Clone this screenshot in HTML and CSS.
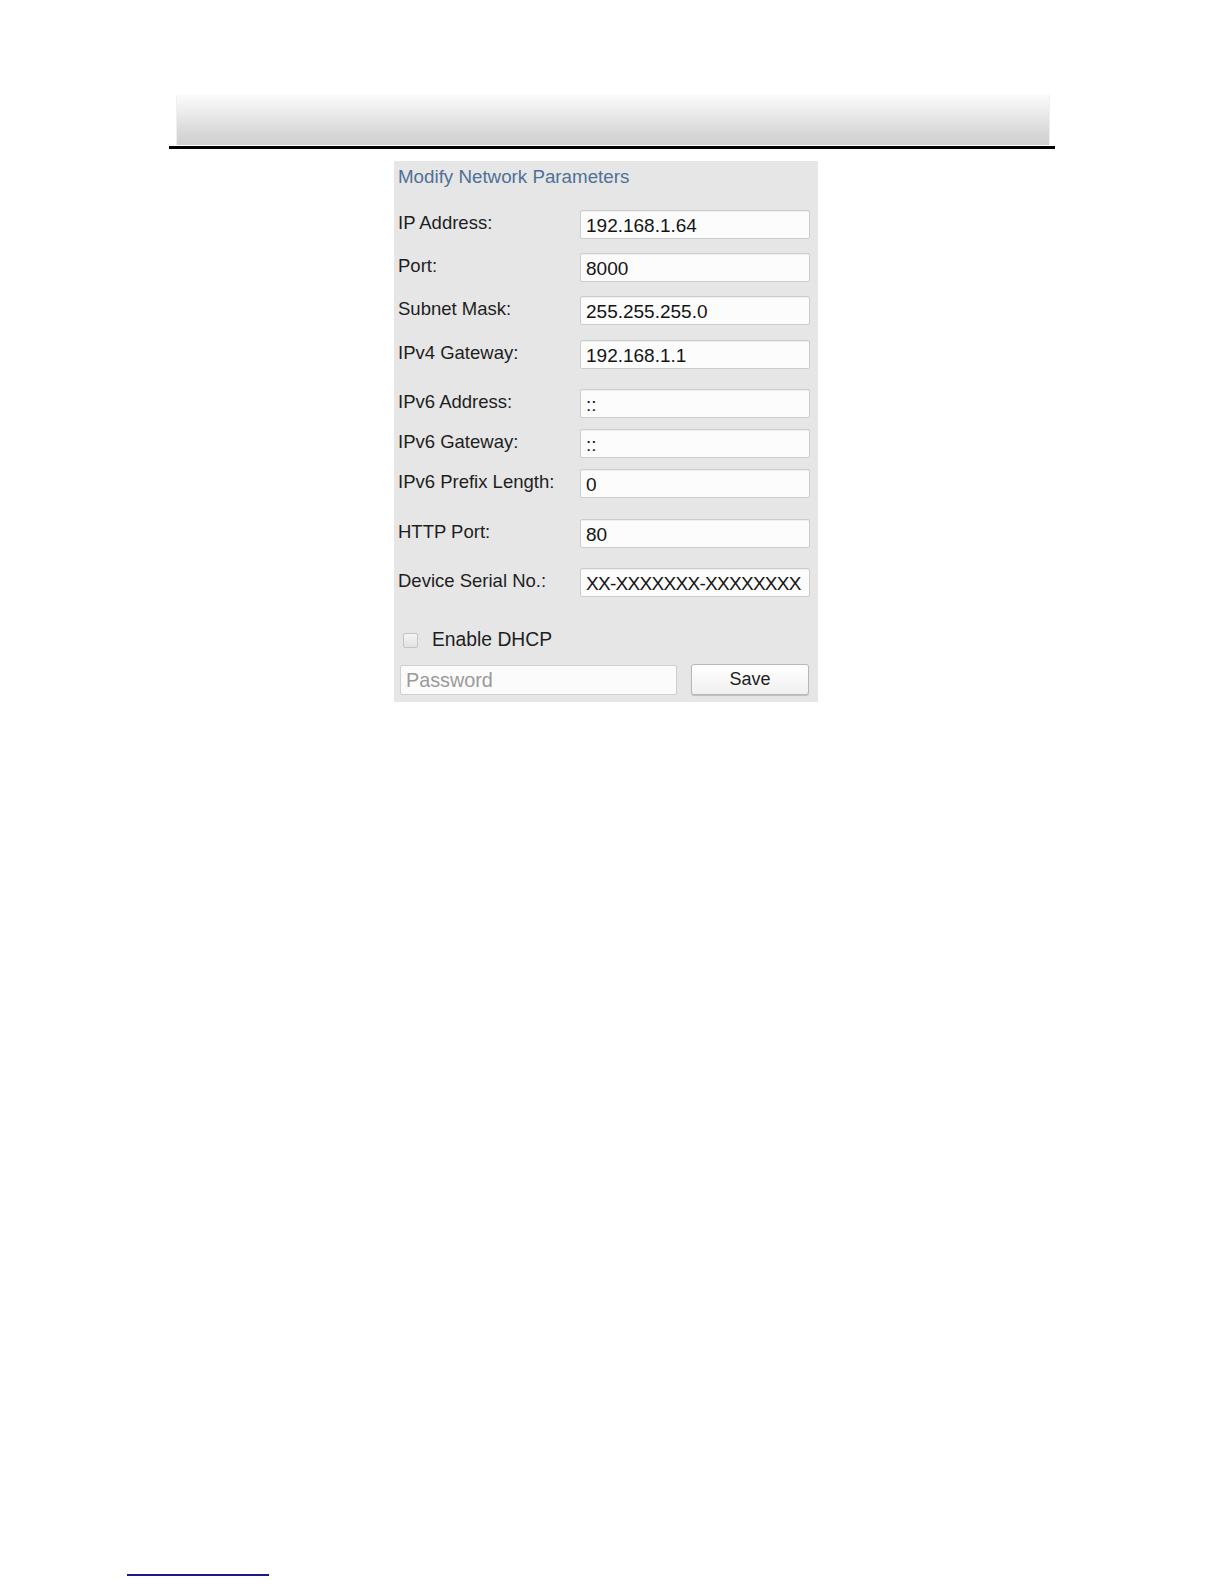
FILE: index.html
```html
<!DOCTYPE html>
<html lang="en">
<head>
<meta charset="utf-8">
<title>Modify Network Parameters</title>
<link rel="stylesheet" href="styles.css">
</head>
<body>
<div class="page">
  <header class="header">
    <div class="header-bar"></div>
    <div class="header-rule"></div>
  </header>

  <section class="panel">
    <h1 class="panel-title">Modify Network Parameters</h1>

    <div class="row first">
      <span class="label">IP Address:</span>
      <span class="field">192.168.1.64</span>
    </div>
    <div class="row gap-14">
      <span class="label">Port:</span>
      <span class="field">8000</span>
    </div>
    <div class="row gap-14">
      <span class="label">Subnet Mask:</span>
      <span class="field">255.255.255.0</span>
    </div>
    <div class="row gap-15">
      <span class="label">IPv4 Gateway:</span>
      <span class="field">192.168.1.1</span>
    </div>
    <div class="row gap-20">
      <span class="label">IPv6 Address:</span>
      <span class="field">::</span>
    </div>
    <div class="row gap-11">
      <span class="label">IPv6 Gateway:</span>
      <span class="field">::</span>
    </div>
    <div class="row gap-11">
      <span class="label">IPv6 Prefix Length:</span>
      <span class="field">0</span>
    </div>
    <div class="row gap-21">
      <span class="label">HTTP Port:</span>
      <span class="field">80</span>
    </div>
    <div class="row gap-20">
      <span class="label">Device Serial No.:</span>
      <span class="field serial">XX-XXXXXXX-XXXXXXXX</span>
    </div>

    <div class="dhcp">
      <span class="checkbox"></span>
      <span class="dhcp-label">Enable DHCP</span>
    </div>

    <div class="actions">
      <span class="password">Password</span>
      <span class="save">Save</span>
    </div>
  </section>

  <footer class="footer">
    <div class="footer-link"></div>
  </footer>
</div>
</body>
</html>
```

FILE: styles.css
```css
html, body {
  margin: 0;
  padding: 0;
  background: #ffffff;
}

.page {
  min-height: 1584px;
  display: flex;
  flex-direction: column;
  box-sizing: border-box;
  font-family: "Liberation Sans", Arial, sans-serif;
}

.header {
  margin-top: 95px;
  margin-left: 169px;
  width: 886px;
}

.header-bar {
  height: 50px;
  margin: 0 5px 0 7px;
  background: linear-gradient(to bottom, #fbfbfb 0%, #ebebeb 35%, #d8d8d8 75%, #cfcfcf 100%);
  border-left: 1px solid #f0f0f0;
  border-right: 1px solid #f0f0f0;
}

.header-rule {
  height: 3px;
  margin-top: 1px;
  background: #000000;
}

.panel {
  margin-top: 12px;
  margin-left: 394px;
  width: 424px;
  box-sizing: border-box;
  padding: 5px 8px 7px 4px;
  background: #e6e6e6;
  color: #1e1e1e;
}

.panel-title {
  margin: 0;
  font-size: 18.75px;
  line-height: 21px;
  font-weight: normal;
  color: #4f7196;
}

.row {
  display: flex;
  align-items: center;
  height: 29px;
}

.row.first { margin-top: 23px; }
.row.gap-11 { margin-top: 11px; }
.row.gap-14 { margin-top: 14px; }
.row.gap-15 { margin-top: 15px; }
.row.gap-20 { margin-top: 20px; }
.row.gap-21 { margin-top: 21px; }

.label {
  width: 182px;
  flex: none;
  padding-bottom: 3px;
  font-size: 18.5px;
  color: #1e1e1e;
}

.field {
  width: 230px;
  height: 29px;
  box-sizing: border-box;
  display: flex;
  align-items: center;
  padding: 2px 0 0 5px;
  background: #fcfcfc;
  border: 1px solid #cdcdcd;
  border-radius: 2px;
  box-shadow: inset 0 1px 1px rgba(0, 0, 0, 0.06);
  font-size: 19px;
  color: #141414;
  white-space: nowrap;
  overflow: hidden;
}

.field.serial {
  letter-spacing: -0.7px;
}

.dhcp {
  display: flex;
  align-items: center;
  margin-top: 33px;
  height: 20px;
}

.checkbox {
  width: 15px;
  height: 15px;
  box-sizing: border-box;
  margin-left: 5px;
  border: 1px solid #c4c4c4;
  border-radius: 2px;
  background: linear-gradient(to bottom, #f4f4f4, #e2e2e2);
}

.dhcp-label {
  margin-left: 14px;
  font-size: 19.3px;
  color: #1e1e1e;
}

.actions {
  display: flex;
  align-items: center;
  margin-top: 14px;
}

.password {
  margin-left: 2px;
  width: 277px;
  height: 30px;
  box-sizing: border-box;
  display: flex;
  align-items: center;
  padding: 2px 0 0 5px;
  background: #fbfbfb;
  border: 1px solid #cfcfcf;
  border-radius: 2px;
  font-size: 19.8px;
  color: #9a9a9a;
}

.save {
  margin-left: 14px;
  width: 118px;
  height: 31px;
  box-sizing: border-box;
  display: flex;
  align-items: center;
  justify-content: center;
  background: linear-gradient(to bottom, #ffffff, #f0f0f0);
  border: 1px solid #b8b8b8;
  border-radius: 3px;
  box-shadow: 0 1px 1px rgba(0, 0, 0, 0.18);
  font-size: 18px;
  color: #1e1e1e;
}

.footer {
  margin-top: auto;
  padding: 0 0 8px 127px;
}

.footer-link {
  width: 142px;
  height: 2px;
  background: #1a1a8a;
}
```
